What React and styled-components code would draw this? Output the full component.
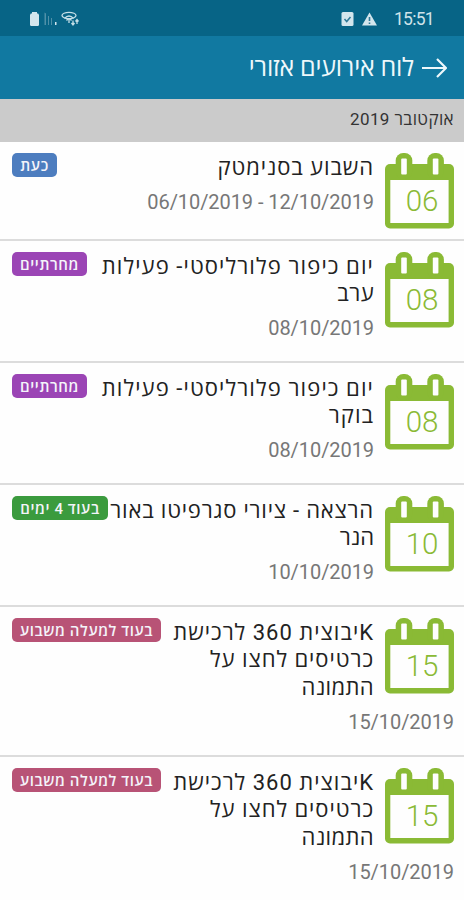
import React from 'react';
import styled, { createGlobalStyle } from 'styled-components';

const GlobalStyle = createGlobalStyle`
  * {
    box-sizing: border-box;
  }

  body {
    margin: 0;
    background: #fff;
    font-family: Roboto, 'Open Sans', 'Noto Sans', sans-serif;
  }
`;

const Screen = styled.div`
  width: 464px;
  height: 900px;
  overflow: hidden;
  background: #fefefe;
  direction: rtl;
`;

const StatusBar = styled.div`
  display: flex;
  align-items: center;
  justify-content: space-between;
  height: 36px;
  padding: 2px 30px 0 29px;
  background: #076486;
  direction: ltr;
`;

const StatusGroup = styled.div`
  display: flex;
  align-items: center;
  gap: ${(props) => props.$gap}px;
`;

const Clock = styled.span`
  margin-left: 9px;
  color: #cfe3ea;
  font-size: 17.5px;
  letter-spacing: -0.7px;
`;

const AppBar = styled.header`
  display: flex;
  align-items: center;
  gap: 8px;
  height: 63px;
  padding: 0 17px 0 0;
  background: #1179a1;
  color: #eef8fb;
`;

const AppTitle = styled.h1`
  margin: 0;
  font-size: 25px;
  font-weight: 400;
  line-height: 30px;
  white-space: nowrap;
  letter-spacing: -0.2px;
`;

const MonthHeader = styled.div`
  height: 43px;
  padding: 8px 10px 0 0;
  background: #cbcbcb;
  color: #333;
  font-size: 17px;
  line-height: 24px;
  letter-spacing: 0.4px;
`;

const EventRow = styled.article`
  height: ${(props) => props.$height}px;
  padding: 11px 10px 0 12px;
  border-bottom: 2px solid #dcdcdc;
`;

const Calendar = styled.div`
  float: right;
  display: grid;
  width: 69px;
  height: 76px;
  margin-left: 11px;
`;

const CalendarShape = styled.svg`
  grid-area: 1 / 1;
`;

const CalendarDay = styled.span`
  grid-area: 1 / 1;
  padding: 30px 0 0 5px;
  color: #8aba35;
  font-size: 29.5px;
  font-weight: 350;
  line-height: 36px;
  text-align: center;
  direction: ltr;
`;

const Badge = styled.span`
  float: left;
  display: flex;
  align-items: center;
  justify-content: center;
  width: ${(props) => props.$width}px;
  height: 24px;
  padding-bottom: 1px;
  border-radius: 5px;
  background: ${(props) => props.$color};
  color: #f4f4fa;
  font-size: 15px;
  font-weight: 550;
  white-space: nowrap;
  letter-spacing: 0.6px;
`;

const Title = styled.h2`
  margin: 0;
  padding-top: 0.5px;
  color: #222;
  font-size: 22px;
  font-weight: 400;
  line-height: 27.8px;
`;

const TitleLine = styled.span`
  display: block;
  white-space: nowrap;
  letter-spacing: ${(props) => props.$spacing}px;
`;

const EventDate = styled.div`
  margin-top: 6.4px;
  color: #777;
  font-size: 20px;
  line-height: 28px;
`;

const DateText = styled.bdi`
  letter-spacing: -0.07px;
`;

const events = [
  {
    day: '06',
    lines: [{ text: 'השבוע בסנימטק', spacing: 0.9 }],
    date: '06/10/2019 - 12/10/2019',
    badge: 'כעת',
    badgeWidth: 45,
    color: '#4d7dbf',
    height: 99,
  },
  {
    day: '08',
    lines: [
      { text: 'יום כיפור פלורליסטי- פעילות', spacing: 1.1 },
      { text: 'ערב', spacing: 0.4 },
    ],
    date: '08/10/2019',
    badge: 'מחרתיים',
    badgeWidth: 75,
    color: '#9b45b5',
    height: 122,
  },
  {
    day: '08',
    lines: [
      { text: 'יום כיפור פלורליסטי- פעילות', spacing: 1.1 },
      { text: 'בוקר', spacing: 1 },
    ],
    date: '08/10/2019',
    badge: 'מחרתיים',
    badgeWidth: 75,
    color: '#9b45b5',
    height: 122,
  },
  {
    day: '10',
    lines: [
      { text: 'הרצאה - ציורי סגרפיטו באור', spacing: 0.8 },
      { text: 'הנר', spacing: 0 },
    ],
    date: '10/10/2019',
    badge: 'בעוד 4 ימים',
    badgeWidth: 96,
    color: '#3b9b3e',
    height: 122,
  },
  {
    day: '15',
    lines: [
      { text: 'Kיבוצית 360 לרכישת', spacing: 1 },
      { text: 'כרטיסים לחצו על', spacing: 0.95 },
      { text: 'התמונה', spacing: 0.35 },
    ],
    date: '15/10/2019',
    badge: 'בעוד למעלה משבוע',
    badgeWidth: 149,
    color: '#b85376',
    height: 150,
  },
  {
    day: '15',
    lines: [
      { text: 'Kיבוצית 360 לרכישת', spacing: 1 },
      { text: 'כרטיסים לחצו על', spacing: 0.95 },
      { text: 'התמונה', spacing: 0.35 },
    ],
    date: '15/10/2019',
    badge: 'בעוד למעלה משבוע',
    badgeWidth: 149,
    color: '#b85376',
    height: 150,
  },
];

const CalendarIcon = ({ day }) => (
  <Calendar>
    <CalendarShape width="69" height="76" viewBox="0 0 69 76" fill="#8aba35">
      <rect x="0" y="11" width="69" height="64.5" rx="5" />
      <rect x="10.7" y="0" width="16.6" height="26" rx="7.5" />
      <rect x="42.3" y="0" width="16.6" height="26" rx="7.5" />
      <rect x="16.2" y="5.6" width="5.6" height="16" rx="1" fill="#fefefe" />
      <rect x="47.8" y="5.6" width="5.6" height="16" rx="1" fill="#fefefe" />
      <rect x="5.3" y="27" width="58.3" height="43" fill="#fefefe" />
    </CalendarShape>
    <CalendarDay>{day}</CalendarDay>
  </Calendar>
);

const App = () => {
  return (
    <Screen>
      <GlobalStyle />
      <StatusBar>
        <StatusGroup $gap={4}>
          <svg width="11" height="16" viewBox="0 0 11 16" fill="#d3e6ed">
            <path d="M3 1h5v1.5h1.2L10 4v10.2L9 15H2l-1-.8V4l.8-1.500H3z" />
          </svg>
          <svg width="13" height="14" viewBox="0 0 13 14" fill="#4f90a8">
            <path d="M0.500 0.500l1.500 1V13H0.500zM4 4h1v9H4zM7 6h1v7H7z" />
            <path d="M11 10h1.500v3H11z" fill="#d3e6ed" />
          </svg>
          <svg width="19" height="16" viewBox="0 0 19 16" fill="none" stroke="#c4dee7" strokeWidth="1.300">
            <ellipse cx="8" cy="4.500" rx="7" ry="3.200" />
            <path d="M3.500 7.500Q8 2.500 12.500 7.500M5.500 9.500Q8 6 10.500 9.500M8 8v4" />
            <path d="M12 9.500v4M10.500 12l1.500 2 1.500-2M16 13V9M14.500 10.500l1.500-2 1.500 2" />
          </svg>
        </StatusGroup>
        <StatusGroup $gap={8}>
          <svg width="13" height="14" viewBox="0 0 13 14">
            <rect x="0.500" width="12" height="14" rx="1.500" fill="#d3e6ed" />
            <path d="M3.500 7l2.200 2.500L9.500 5" fill="none" stroke="#2e7896" strokeWidth="1.500" />
          </svg>
          <svg width="15" height="14" viewBox="0 0 15 14">
            <path d="M7.500 0.500L15 13.500H0z" fill="#d3e6ed" />
            <path d="M7.500 5v4M7.500 10.500V12" stroke="#2e7896" strokeWidth="1.600" />
          </svg>
          <Clock>15:51</Clock>
        </StatusGroup>
      </StatusBar>
      <AppBar>
        <svg width="25" height="20" viewBox="0 0 25 20" fill="none" stroke="#eef8fb" strokeWidth="2.200">
          <path d="M0 10h24M15 1l9 9-9 9" />
        </svg>
        <AppTitle>לוח אירועים אזורי</AppTitle>
      </AppBar>
      <MonthHeader>אוקטובר 2019</MonthHeader>
      {events.map((event, index) => (
        <EventRow key={index} $height={event.height}>
          <CalendarIcon day={event.day} />
          <Badge $color={event.color} $width={event.badgeWidth}>
            {event.badge}
          </Badge>
          <Title>
            {event.lines.map((line) => (
              <TitleLine key={line.text} $spacing={line.spacing}>
                {line.text}
              </TitleLine>
            ))}
          </Title>
          <EventDate>
            <DateText dir="ltr">{event.date}</DateText>
          </EventDate>
        </EventRow>
      ))}
    </Screen>
  );
};

export default App;
